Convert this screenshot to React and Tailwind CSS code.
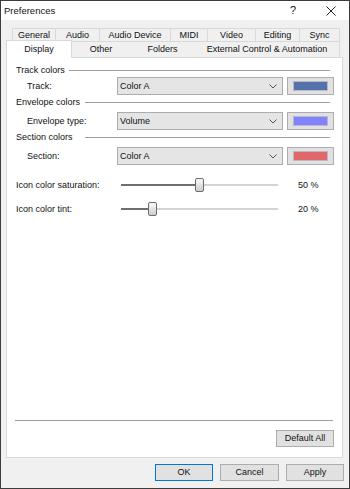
import React from 'react'

const row1 = [
  ['General', 'w-[43px]'],
  ['Audio', 'w-[44px]'],
  ['Audio Device', 'w-[71px]'],
  ['MIDI', 'w-[37px]'],
  ['Video', 'w-[48px]'],
  ['Editing', 'w-[44px]'],
  ['Sync', 'w-[41px] border-r'],
]

const row2 = [
  ['Other', 'w-[58px]'],
  ['Folders', 'w-[65px]'],
  ['External Control & Automation', 'w-[145px] border-r'],
]

function GroupHeader({ label, lineClass, className = '' }) {
  return (
    <div className={`flex items-center justify-between h-[14px] ml-[9px] mr-[12px] ${className}`}>
      <span>{label}</span>
      <div className={`h-px bg-[#a0a0a0] ${lineClass}`} />
    </div>
  )
}

function ColorRow({ label, value, swatch, className = '' }) {
  return (
    <div className={`flex items-center h-[18px] ${className}`}>
      <span className="ml-[20px] w-[90px]">{label}</span>
      <div className="w-[166px] h-[18px] border border-[#acacac] bg-[#e5e5e5] flex items-center justify-between pl-[2px] pr-[5px]">
        <span>{value}</span>
        <svg width="8" height="5" viewBox="0 0 8 5">
          <path d="M0.5 0.5 L4 4 L7.5 0.5" fill="none" stroke="#555" strokeWidth="1" />
        </svg>
      </div>
      <div className="ml-[4px] w-[47px] h-[18px] border border-[#adadad] bg-[#e1e1e1] flex items-center justify-center">
        <div className={`w-[35px] h-[10px] border border-[#b8b8c8] ${swatch}`} />
      </div>
    </div>
  )
}

function SliderRow({ label, value, className = '' }) {
  const left = Math.round((value / 100) * 157 - 4.5)
  return (
    <div className={`flex items-center h-[20px] ${className}`}>
      <span className="ml-[9px] w-[105px]">{label}</span>
      <div className="relative w-[157px] h-[14px] flex items-center">
        <div className="w-full h-[2px] bg-[#d4d4d4]" />
        <div className="absolute left-0 h-[2px] bg-[#6e6e6e]" style={{ width: left + 4 }} />
        <div
          className="absolute top-0 w-[9px] h-[14px] rounded-[2px] border border-[#6b6b6b] bg-gradient-to-b from-[#fbfbfb] to-[#cdcdcd]"
          style={{ left }}
        />
      </div>
      <span className="ml-[20px]">{value} %</span>
    </div>
  )
}

function Button({ children, className = '' }) {
  return (
    <div className={`h-[17px] flex items-center justify-center border bg-[#e1e1e1] ${className}`}>
      {children}
    </div>
  )
}

export default function App() {
  return (
    <div className="w-[350px] h-[489px] border border-[#3c3c3c] bg-[#f0f0f0] flex flex-col text-[9px] text-[#111] font-['Liberation_Sans',Arial,sans-serif] leading-none">
      {/* Title bar */}
      <div className="h-[19px] bg-white flex items-center shrink-0">
        <span className="ml-[3px] text-[9.5px]">Preferences</span>
        <span className="ml-auto text-[11px]">?</span>
        <svg className="ml-[30px] mr-[13px]" width="10" height="10" viewBox="0 0 10 10">
          <path d="M0.5 0.5 L9.5 9.5 M9.5 0.5 L0.5 9.5" stroke="#222" strokeWidth="1" />
        </svg>
      </div>

      {/* Tabs */}
      <div className="mt-[8px] flex ml-[11px] h-[13px]">
        {row1.map(([t, w]) => (
          <div key={t} className={`${w} h-[13px] border-t border-l border-[#d9d9d9] flex items-center justify-center`}>
            {t}
          </div>
        ))}
      </div>
      <div className="flex items-end ml-[5px] h-[16px]">
        <div className="relative z-10 w-[66px] h-[18px] -mb-px bg-white border-t border-l border-r border-[#d9d9d9] flex items-center justify-center pb-[1px]">
          Display
        </div>
        {row2.map(([t, w]) => (
          <div key={t} className={`${w} h-[16px] border-t border-[#d9d9d9] flex items-center justify-center`}>
            {t}
          </div>
        ))}
      </div>

      {/* Panel */}
      <div className="ml-[5px] w-[337px] h-[401px] border border-[#d9d9d9] bg-white flex flex-col">
        <GroupHeader label="Track colors" lineClass="w-[261px]" className="mt-[5px]" />
        <ColorRow label="Track:" value="Color A" swatch="bg-[#5672aa]" />
        <GroupHeader label="Envelope colors" lineClass="w-[245px]" />
        <ColorRow label="Envelope type:" value="Volume" swatch="bg-[#8282ff]" className="mt-[3px]" />
        <GroupHeader label="Section colors" lineClass="w-[245px]" />
        <ColorRow label="Section:" value="Color A" swatch="bg-[#e06868]" className="mt-[3px]" />

        <SliderRow label="Icon color saturation:" value={50} className="mt-[10px]" />
        <SliderRow label="Icon color tint:" value={20} className="mt-[4px]" />

        <div className="flex-1" />
        <div className="ml-[8px] mr-[9px] h-px bg-[#a0a0a0]" />
        <Button className="mt-[9px] mb-[10px] self-end mr-[8px] w-[58px] border-[#adadad]">Default All</Button>
      </div>

      {/* Dialog buttons */}
      <div className="mt-[6px] flex justify-end gap-[7px] mr-[5px]">
        <Button className="w-[58px] border-[#0078d7]">OK</Button>
        <Button className="w-[59px] border-[#adadad]">Cancel</Button>
        <Button className="w-[58px] border-[#adadad]">Apply</Button>
      </div>
    </div>
  )
}
